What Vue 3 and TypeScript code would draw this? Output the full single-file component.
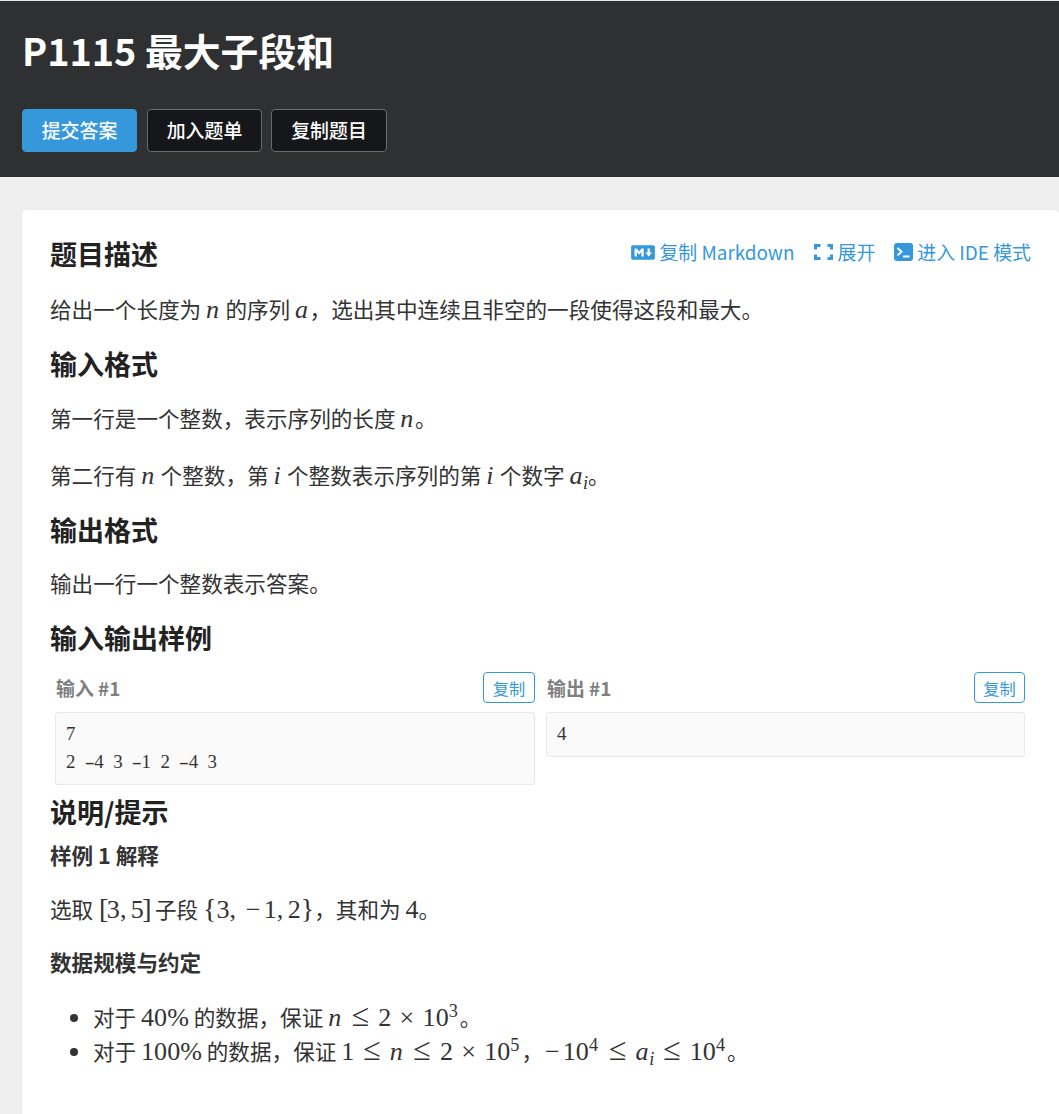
<script setup lang="ts">
const codeLines: string[][] = [['7'], '2 -4 3 -1 2 -4 3'.split('')]
const outLines: string[][] = [['4']]
const buttons = [
  { label: '提交答案', primary: true },
  { label: '加入题单', primary: false },
  { label: '复制题目', primary: false },
]
</script>

<template>
  <div class="page">
    <header class="hero">
      <h1 class="title">P1115 最大子段和</h1>
      <div class="actions">
        <button v-for="b in buttons" :key="b.label" class="btn" :class="{ primary: b.primary }">{{ b.label }}</button>
      </div>
    </header>
    <main class="main">
      <section class="card">
        <div class="head-row">
          <h2 class="h2 first">题目描述</h2>
          <div class="links">
            <a class="link">
              <svg class="ic md" viewBox="0 0 640 512"><path fill="currentColor" d="M593.8 59.1H46.2C20.7 59.1 0 79.8 0 105.2v301.5c0 25.5 20.7 46.2 46.2 46.2h547.7c25.5 0 46.2-20.7 46.1-46.1V105.2c0-25.4-20.7-46.1-46.2-46.1zM338.5 360.6H277v-120l-61.5 76.9-61.5-76.9v120H92.3V151.4h61.5l61.5 76.9 61.5-76.9h61.5v209.2zm135.3 3.1L381.5 256H443V151.4h61.5V256H566z"/></svg>
              复制 Markdown
            </a>
            <a class="link">
              <svg class="ic ex" viewBox="0 0 20 20"><path fill="none" stroke="currentColor" stroke-width="3" d="M6.5 3.5H1.5v4M13.5 3.5h4v4M6.5 16.5H1.5v-4M13.5 16.5h4v-4"/></svg>
              展开
            </a>
            <a class="link">
              <svg class="ic te" viewBox="0 0 19 20"><rect x="0" y="1" width="19" height="18" rx="3" fill="currentColor"/><path fill="none" stroke="#fff" stroke-width="1.9" d="M3.5 6l4 3.7-4 3.7M9 14.5h6.5"/></svg>
              进入 IDE 模式
            </a>
          </div>
        </div>
        <p class="p p1">给出一个长度为 <i class="m v">n</i> 的序列 <i class="m v">a</i>，选出其中连续且非空的一段使得这段和最大。</p>

        <h2 class="h2">输入格式</h2>
        <p class="p p-first">第一行是一个整数，表示序列的长度 <i class="m v">n</i>。</p>
        <p class="p">第二行有 <i class="m v">n</i> 个整数，第 <i class="m v">i</i> 个整数表示序列的第 <i class="m v">i</i> 个数字 <span class="m"><i class="v">a</i><sub class="s sb"><i>i</i></sub></span>。</p>

        <h2 class="h2">输出格式</h2>
        <p class="p p-first">输出一行一个整数表示答案。</p>

        <h2 class="h2">输入输出样例</h2>
        <div class="samples">
          <div class="sample">
            <div class="sample-head"><span class="sample-label">输入 #1</span><button class="copy">复制</button></div>
            <pre class="code"><div v-for="(l, i) in codeLines" :key="i" class="line"><span v-for="(c, j) in l" :key="j" class="cell" :class="{ dash: c === '-' }">{{ c }}</span></div></pre>
          </div>
          <div class="sample">
            <div class="sample-head"><span class="sample-label">输出 #1</span><button class="copy">复制</button></div>
            <pre class="code"><div v-for="(l, i) in outLines" :key="i" class="line"><span v-for="(c, j) in l" :key="j" class="cell">{{ c }}</span></div></pre>
          </div>
        </div>

        <h2 class="h2 hint">说明/提示</h2>
        <h4 class="h4 h4a">样例 1 解释</h4>
        <p class="p p-expl">选取 <span class="m"><span class="br sq sql">[</span>3<span class="cm">,</span>5<span class="br sq">]</span></span> 子段 <span class="m"><span class="br">{</span>3<span class="cm">,</span><span class="neg">−</span>1<span class="cm">,</span>2<span class="br">}</span></span>，其和为 <span class="m">4</span>。</p>
        <h4 class="h4 h4b">数据规模与约定</h4>
        <ul class="ul">
          <li>对于 <span class="m">40%</span> 的数据，保证 <span class="m"><i class="v">n</i><span class="rel">≤</span>2<span class="bin">×</span>10<sup class="s sp">3</sup></span>。</li>
          <li>对于 <span class="m">100%</span> 的数据，保证 <span class="m">1<span class="rel">≤</span><i class="v">n</i><span class="rel">≤</span>2<span class="bin">×</span>10<sup class="s sp">5</sup></span>，<span class="m"><span class="neg1">−</span>10<sup class="s sp">4</sup><span class="rel">≤</span><i class="v">a</i><sub class="s sb"><i>i</i></sub><span class="rel">≤</span>10<sup class="s sp">4</sup></span>。</li>
        </ul>
      </section>
    </main>
  </div>
</template>

<style>
html, body { margin: 0; padding: 0; overflow: hidden; }
</style>

<style scoped>
.page {
  height: 1114px;
  overflow: hidden;
  background: #efefef;
  font-family: "Noto Sans CJK SC", "Noto Sans", sans-serif;
  font-size: 21.6px;
  color: #333;
}
.hero {
  height: 177px;
  box-sizing: border-box;
  background: #2f3032;
  border-top: 1px solid #e8e8e8;
  padding: 0 22px;
}
.title {
  margin: 0;
  padding-top: 24px;
  font-size: 37.8px;
  line-height: 50px;
  font-weight: 700;
  color: #fff;
}
.actions { display: flex; gap: 10px; margin-top: 34px; }
.btn {
  width: 115px;
  height: 43px;
  box-sizing: border-box;
  padding: 0 0 2px;
  border: 1px solid #6a6a6a;
  border-radius: 4px;
  background: #16171a;
  color: #fff;
  font: 500 18.9px "Noto Sans CJK SC", sans-serif;
}
.btn:last-child { width: 116px; margin-left: -1px; }
.btn.primary { background: #3498db; border-color: #3498db; }
.main { padding: 33px 0 0 22px; }
.card {
  height: 920px;
  box-sizing: border-box;
  background: #fff;
  border-radius: 5px;
  padding: 27px 28px;
  box-shadow: 0 1px 3px rgba(0,0,0,.06);
}
.head-row { display: flex; justify-content: space-between; align-items: flex-start; }
.h2 {
  margin: 0;
  font-size: 27px;
  line-height: 34px;
  font-weight: 700;
  color: #222;
  margin-top: 21px;
}
.h2.first { margin-top: 0; }
.links { display: flex; gap: 19px; font-size: 18.9px; color: #3498db; line-height: 30px; }
.link { display: flex; align-items: center; gap: 4px; }
.ic { display: block; flex: none; }
.md { width: 24px; height: 19px; }
.ex { width: 20px; height: 20px; }
.te { width: 19px; height: 20px; }
.p { margin: 0; line-height: 34px; margin-top: 23px; }
.p1 { margin-top: 21px; }
.p-first { margin-top: 19.5px; }
.m {
  font-family: "Liberation Serif", serif;
  font-size: 26.1px;
  line-height: 1;
  font-style: normal;
}
.v { padding: 0 1.5px 0 0; }
i.m, .m i { font-style: italic; }
.s { font-size: 18.3px; line-height: 0; }
.sb { vertical-align: -5px; margin-left: -1px; }
.sp { margin-right: 2px; }
.cm { margin-right: 4.3px; }
.br { font-size: 28px; line-height: 0; }
.sq { margin: 0 -1.5px; }
.sql { margin-left: 1px; }
.neg { padding: 0 3.4px 0 5.4px; }
.neg1 { padding: 0 3px 0 2px; }
.rel { margin: 0 9px; font-size: 32px; line-height: 0; }
.bin { margin: 0 8.3px; }
.samples {
  display: grid;
  grid-template-columns: 480px 479px;
  gap: 11px;
  padding-left: 5px;
  align-items: start;
  margin-top: 17px;
}
.sample-head {
  display: flex;
  justify-content: space-between;
  align-items: center;
  height: 31px;
  margin-bottom: 8.5px;
}
.sample-label { font-size: 18.9px; font-weight: 700; color: #7f7f7f; padding-left: 1px; }
.copy {
  width: 52px;
  height: 31px;
  padding: 0;
  background: #fff;
  border: 1px solid #3498db;
  border-radius: 4px;
  color: #3498db;
  font: 400 16.2px "Noto Sans CJK SC", sans-serif;
}
.sample:last-child .copy { width: 51px; }
.code {
  margin: 0;
  padding: 7.6px 10px;
  background: #fafafa;
  border: 1px solid #e8e8e8;
  border-radius: 3px;
  font-family: "Liberation Serif", serif;
  font-size: 18.9px;
  line-height: 28.35px;
  color: #333;
}
.line { display: flex; height: 28.35px; }
.cell { display: block; width: 9.45px; text-align: center; white-space: pre; }
.dash { transform: scaleX(1.6); }
.hint { margin-top: 10px; }
.h4 { margin: 0; font-size: 21.6px; line-height: 30px; font-weight: 700; color: #333; }
.h4a { margin-top: 11px; }
.h4b { margin-top: 21px; }
.p-expl { margin-top: 22px; }
.ul { margin: 23px 0 0; padding-left: 43px; line-height: 34px; }
.ul li { height: 34px; }
</style>
